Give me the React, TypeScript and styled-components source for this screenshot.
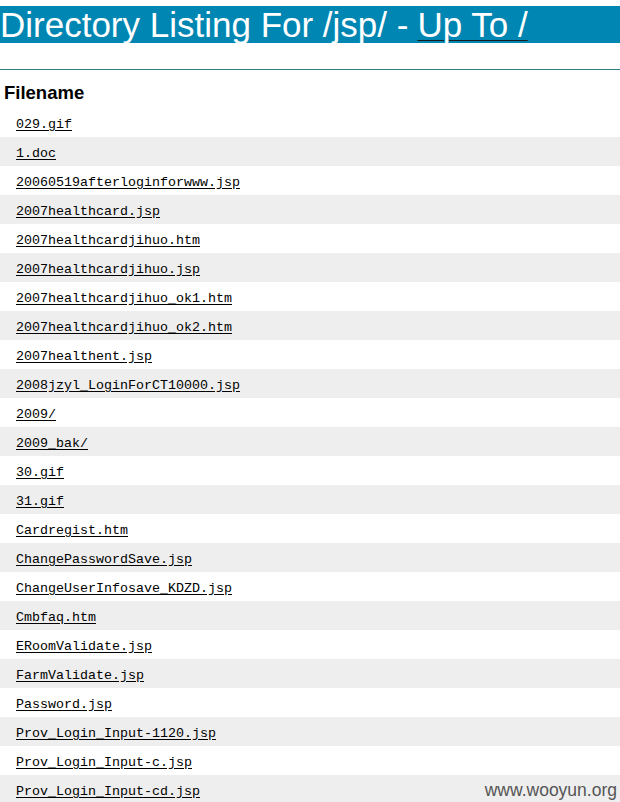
import React from "react";
import styled, { createGlobalStyle } from "styled-components";

const Global = createGlobalStyle`
  html, body { margin: 0; padding: 0; background: #ffffff; }
  body { font-family: "Liberation Sans", Arial, sans-serif; }
`;

const Page = styled.div`
  position: relative;
  width: 620px;
  height: 802px;
  overflow: hidden;
  padding-top: 6px;
  box-sizing: border-box;
`;

const Title = styled.h1`
  margin: 0;
  height: 37px;
  display: flex;
  align-items: center;
  background: #0086b2;
  color: #ffffff;
  font-family: "Liberation Sans", Arial, sans-serif;
  font-weight: normal;
  font-size: 35px;
  line-height: 37px;
  white-space: nowrap;
  padding-left: 0;
`;

const UpLink = styled.a`
  color: #ffffff;
  text-decoration: underline;
  text-decoration-color: #1a1a1a;
  text-decoration-thickness: 1px;
  text-underline-offset: 3px;
  margin-left: 9px;
`;

const Rule = styled.hr`
  margin: 26px 0 0 0;
  border: none;
  height: 1px;
  background: #2f7f86;
`;

const Table = styled.div`
  display: flex;
  flex-direction: column;
`;

const HeadCell = styled.div`
  height: 38px;
  display: flex;
  align-items: center;
  padding: 8px 0 0 4px;
  box-sizing: border-box;
  font-family: "Liberation Sans", Arial, sans-serif;
  font-weight: bold;
  font-size: 18.5px;
  color: #000;
`;

const Row = styled.div<{ $shade: boolean }>`
  height: 29px;
  display: flex;
  align-items: center;
  padding: 3px 0 0 16px;
  box-sizing: border-box;
  background: ${(p) => (p.$shade ? "#eeeeee" : "#ffffff")};
`;

const FileLink = styled.a`
  font-family: "Liberation Mono", "Courier New", monospace;
  font-size: 13.33px;
  color: #000000;
  text-decoration: underline;
  text-underline-offset: 2px;
`;

const Watermark = styled.div`
  position: absolute;
  right: 3px;
  bottom: 1px;
  font-family: "Liberation Sans", Arial, sans-serif;
  font-size: 17.5px;
  color: #555555;
`;

const files = [
  "029.gif",
  "1.doc",
  "20060519afterloginforwww.jsp",
  "2007healthcard.jsp",
  "2007healthcardjihuo.htm",
  "2007healthcardjihuo.jsp",
  "2007healthcardjihuo_ok1.htm",
  "2007healthcardjihuo_ok2.htm",
  "2007healthent.jsp",
  "2008jzyl_LoginForCT10000.jsp",
  "2009/",
  "2009_bak/",
  "30.gif",
  "31.gif",
  "Cardregist.htm",
  "ChangePasswordSave.jsp",
  "ChangeUserInfosave_KDZD.jsp",
  "Cmbfaq.htm",
  "ERoomValidate.jsp",
  "FarmValidate.jsp",
  "Password.jsp",
  "Prov_Login_Input-1120.jsp",
  "Prov_Login_Input-c.jsp",
  "Prov_Login_Input-cd.jsp",
];

export default function App() {
  return (
    <Page>
      <Global />
      <Title>
        Directory Listing For /jsp/ -<UpLink href="#">Up To /</UpLink>
      </Title>
      <Rule />
      <Table>
        <HeadCell>Filename</HeadCell>
        {files.map((f, i) => (
          <Row key={f} $shade={i % 2 === 1}>
            <FileLink href="#">{f}</FileLink>
          </Row>
        ))}
      </Table>
      <Watermark>www.wooyun.org</Watermark>
    </Page>
  );
}
